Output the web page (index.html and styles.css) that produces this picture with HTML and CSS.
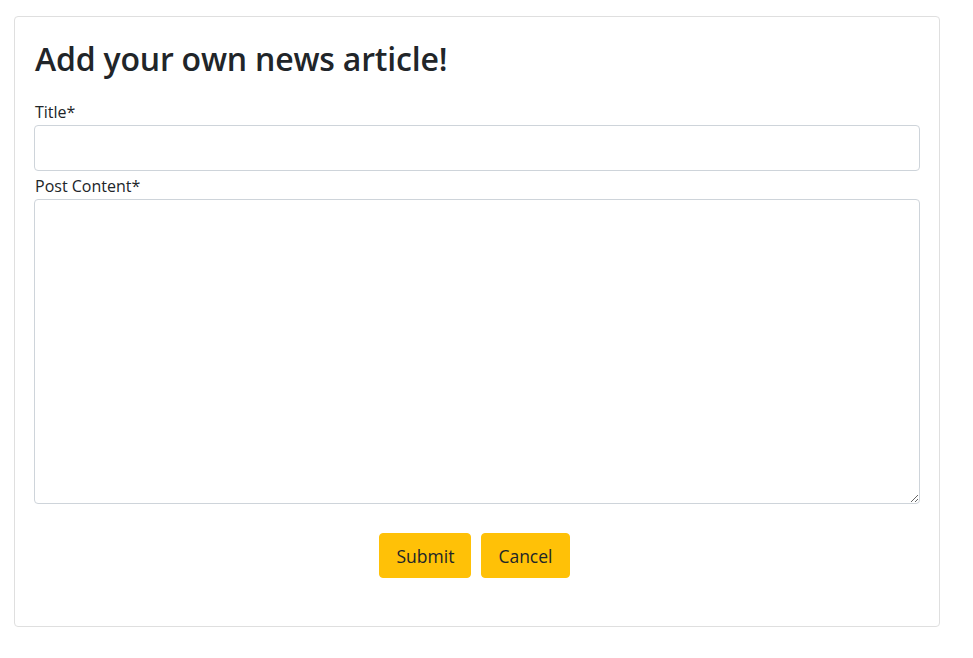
FILE: index.html
```html
<!DOCTYPE html>
<html lang="en">
<head>
<meta charset="utf-8">
<title>Add news article</title>
<link rel="stylesheet" href="styles.css">
</head>
<body>
<div class="card">
  <h1 class="heading">Add your own news article!</h1>
  <form class="form">
    <label class="label" for="title">Title*</label>
    <input class="control" id="title" type="text">
    <label class="label" for="content">Post Content*</label>
    <textarea class="control area" id="content"></textarea>
    <div class="actions">
      <button type="button" class="btn">Submit</button>
      <button type="button" class="btn">Cancel</button>
    </div>
  </form>
</div>
</body>
</html>
```
FILE: styles.css
```css
* { box-sizing: border-box; }
html, body { margin: 0; padding: 0; background: #fff; }
body {
  font-family: "Open Sans", "Noto Sans", sans-serif;
  color: #212529;
  font-size: 16px;
  line-height: 24px;
  padding: 16px 0 0 14px;
}
.card {
  width: 926px;
  height: 611px;
  border: 1px solid #dfdfdf;
  border-radius: 4px;
  padding: 20px 19px 0 19px;
}
.heading {
  margin: 0 0 16px 1px;
  font-size: 32px;
  line-height: 44px;
  font-weight: 600;
  letter-spacing: -0.2px;
}
.form { display: flex; flex-direction: column; }
.label {
  display: block;
  margin: 0 0 1px 1px;
  padding-top: 3px;
  font-size: 16px;
  line-height: 24px;
}
.control {
  display: block;
  width: 100%;
  height: 46px;
  border: 1px solid #ced4da;
  border-radius: 4px;
  font: inherit;
  padding: 6px 12px;
  background: #fff;
}
.area { height: 305px; resize: vertical; }
.actions {
  display: flex;
  justify-content: center;
  gap: 10px;
  margin-top: 29px;
  padding-right: 5px;
}
.btn {
  height: 45px;
  border: 1px solid #ffc107;
  background: #ffc107;
  color: #212529;
  border-radius: 4px;
  font-family: inherit;
  font-size: 17.5px;
  padding: 0 16px;
  cursor: pointer;
}
```
